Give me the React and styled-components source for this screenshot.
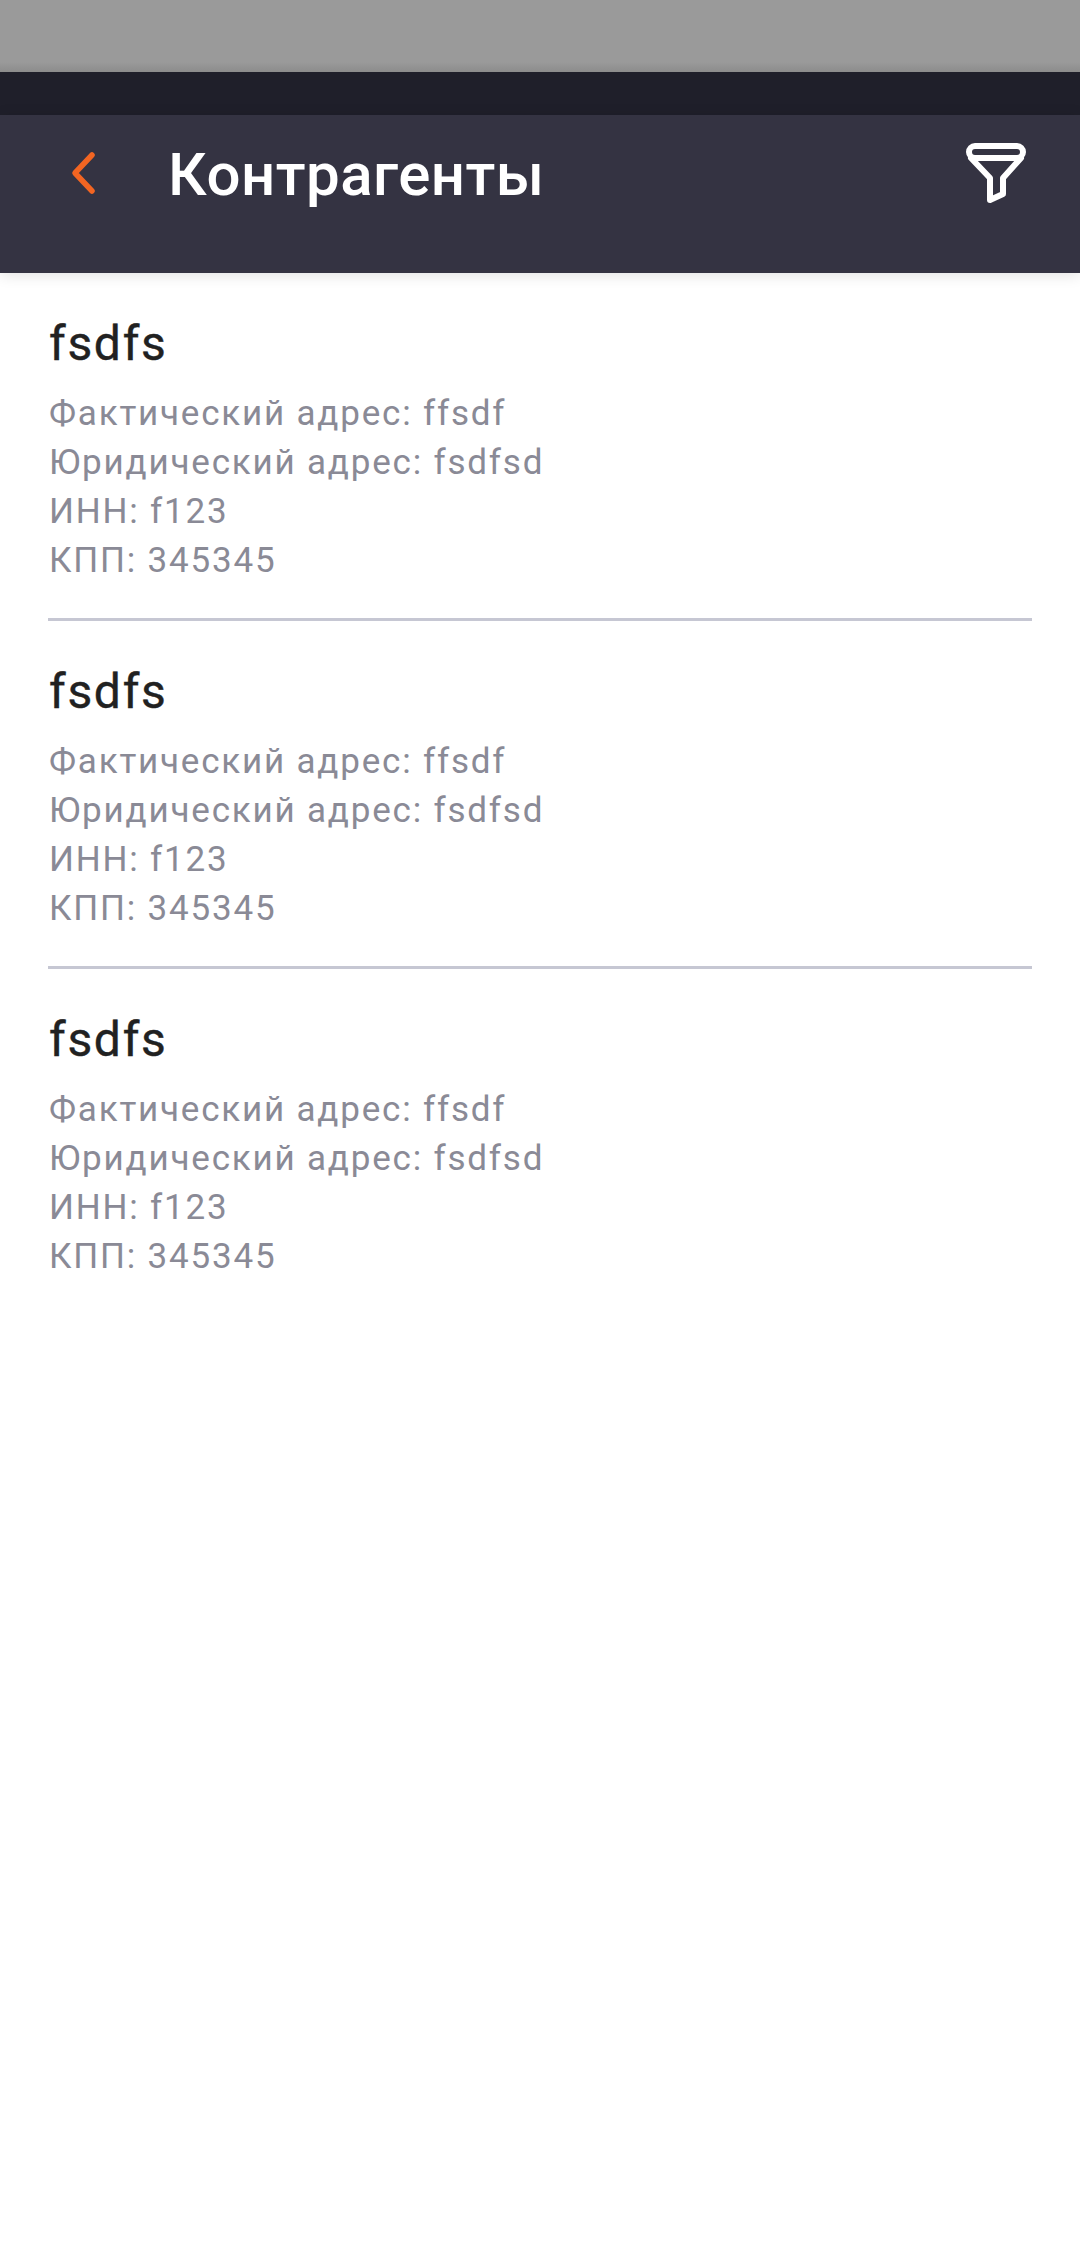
import React from 'react';
import styled, { createGlobalStyle } from 'styled-components';

const GlobalStyle = createGlobalStyle`
  html, body {
    margin: 0;
    padding: 0;
    background: #fff;
    font-family: Roboto, "Noto Sans", sans-serif;
  }
`;

const Page = styled.div`
  width: 1080px;
  height: 2268px;
  overflow: hidden;
  background: #fff;
`;

const TopStrip = styled.div`
  height: 72px;
  background: linear-gradient(to bottom, #9a9a9a 0, #9a9a9a 62px, #8c8c8c 72px);
`;

const StatusBar = styled.div`
  height: 43px;
  background: #1f1f2a;
`;

const Header = styled.header`
  height: 158px;
  box-sizing: border-box;
  padding: 24px 48px 0 67px;
  display: flex;
  align-items: flex-start;
  background: #343342;
  box-shadow: 0 2px 14px rgba(0, 0, 0, 0.12);
  position: relative;
`;

const BackIcon = styled.svg`
  width: 32px;
  height: 54px;
  margin-top: 12px;
  flex-shrink: 0;
`;

const Title = styled.h1`
  flex: 1;
  margin: 0 0 0 69px;
  font-size: 60px;
  line-height: 72px;
  letter-spacing: 0.5px;
  font-weight: 500;
  color: #fff;
`;

const FilterIcon = styled.svg`
  width: 72px;
  height: 72px;
  margin-top: 1px;
  flex-shrink: 0;
`;

const List = styled.div`
  padding: 0 48px;
`;

const Item = styled.div`
  height: 348px;
  box-sizing: border-box;
  padding: 44px 0 0 1px;
  border-bottom: ${(p) => (p.$last ? 'none' : '3px solid #c6c7d3')};
`;

const Name = styled.div`
  font-size: 48px;
  line-height: 54px;
  letter-spacing: 1.7px;
  color: #212121;
  margin-bottom: 18px;
  -webkit-text-stroke: 0.4px #212121;
`;

const Line = styled.div`
  font-size: 35px;
  line-height: 49px;
  letter-spacing: 1.8px;
  color: #8a8a96;
`;

const items = [1, 2, 3];

export default function App() {
  return (
    <Page>
      <GlobalStyle />
      <TopStrip />
      <StatusBar />
      <Header>
        <BackIcon viewBox="0 0 32 54" fill="none">
          <path d="M25 4 L8 22 L25 40" stroke="#f26522" strokeWidth="5.5" strokeLinecap="round" strokeLinejoin="round" />
        </BackIcon>
        <Title>Контрагенты</Title>
        <FilterIcon viewBox="0 0 72 72" fill="none">
          <rect x="9" y="6" width="54" height="12" rx="6" stroke="#fff" strokeWidth="6" />
          <path d="M11 18 L30 38 L30 60 L43 54 L43 38 L61 18" stroke="#fff" strokeWidth="6" strokeLinejoin="round" strokeLinecap="round" />
        </FilterIcon>
      </Header>
      <List>
        {items.map((n, i) => (
          <Item key={n} $last={i === items.length - 1}>
            <Name>fsdfs</Name>
            <Line>Фактический адрес: ffsdf</Line>
            <Line>Юридический адрес: fsdfsd</Line>
            <Line>ИНН: f123</Line>
            <Line>КПП: 345345</Line>
          </Item>
        ))}
      </List>
    </Page>
  );
}
